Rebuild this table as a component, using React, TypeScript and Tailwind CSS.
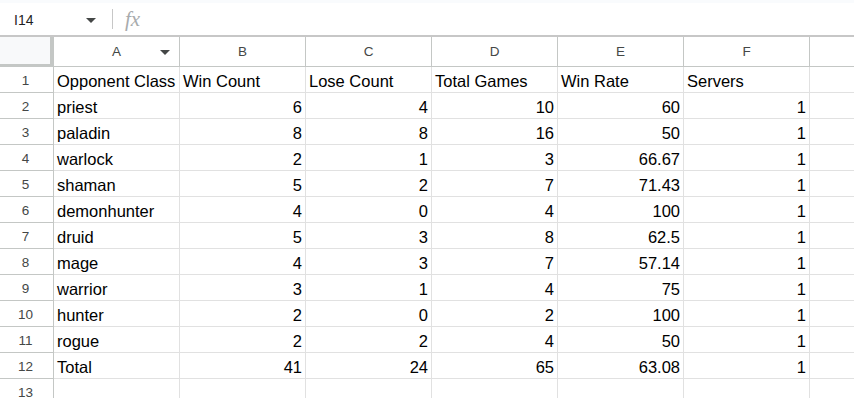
import React from "react";

const columns = ["A", "B", "C", "D", "E", "F"];

const header = ["Opponent Class", "Win Count", "Lose Count", "Total Games", "Win Rate", "Servers"];

const rows: (string | number)[][] = [
  ["priest", 6, 4, 10, 60, 1],
  ["paladin", 8, 8, 16, 50, 1],
  ["warlock", 2, 1, 3, 66.67, 1],
  ["shaman", 5, 2, 7, 71.43, 1],
  ["demonhunter", 4, 0, 4, 100, 1],
  ["druid", 5, 3, 8, 62.5, 1],
  ["mage", 4, 3, 7, 57.14, 1],
  ["warrior", 3, 1, 4, 75, 1],
  ["hunter", 2, 0, 2, 100, 1],
  ["rogue", 2, 2, 4, 50, 1],
  ["Total", 41, 24, 65, 63.08, 1],
];

function Caret({ className }: { className?: string }) {
  return (
    <svg width="10" height="5" viewBox="0 0 10 5" className={className}>
      <path d="M0 0 L10 0 L5 5 Z" fill="#444746" />
    </svg>
  );
}

function RowHeader({ n }: { n: number }) {
  return (
    <div className="flex h-[26px] w-[54px] shrink-0 items-center justify-center border-r border-b border-[#c4c7c5] pt-[3px] pr-[2px] text-[13.5px] text-[#444746]">
      {n}
    </div>
  );
}

function Cell({ value }: { value?: string | number }) {
  const isNum = typeof value === "number";
  return (
    <div
      className={`flex h-[26px] w-[126px] shrink-0 items-center border-r border-b border-[#e1e1e1] px-[3px] pt-[4px] text-[16.5px] text-black ${
        isNum ? "justify-end" : "justify-start"
      }`}
    >
      <span className="whitespace-nowrap">{value}</span>
    </div>
  );
}

function DataRow({ n, cells }: { n: number; cells: (string | number)[] }) {
  return (
    <div className="flex">
      <RowHeader n={n} />
      {columns.map((c, i) => (
        <Cell key={c} value={cells[i]} />
      ))}
      <div className="h-[26px] w-[44px] shrink-0 border-b border-[#e1e1e1]" />
    </div>
  );
}

export default function App() {
  return (
    <div
      className="h-[398px] w-[854px] overflow-hidden bg-white"
      style={{ fontFamily: '"Liberation Sans", Arial, sans-serif' }}
    >
      <div className="h-[3px] bg-[#f9fbfd]" />

      {/* name box + formula bar */}
      <div className="flex h-[34px] items-center border-b-2 border-[#c7c7c7]">
        <div className="flex w-[104px] items-center pt-[3px] pl-[14px] pr-[8px]">
          <span className="flex-1 text-[14px] text-[#1f1f1f]">I14</span>
          <Caret />
        </div>
        <div className="ml-[8px] h-[20px] w-px bg-[#c7c7c7]" />
        <span
          className="ml-[12px] pt-[2px] text-[21px] italic text-[#a8abad]"
          style={{ fontFamily: '"Liberation Serif", "Times New Roman", serif' }}
        >
          fx
        </span>
      </div>

      {/* column headers */}
      <div className="flex">
        <div className="h-[30px] w-[54px] shrink-0 border-r-4 border-b-[3px] border-[#c4c7c5] bg-[#f8f9fa]" />
        {columns.map((c, i) => (
          <div
            key={c}
            className="relative flex h-[30px] w-[126px] shrink-0 items-center justify-center border-r border-b border-[#c4c7c5] pt-[2px] text-[13.5px] text-[#444746]"
          >
            {c}
            {i === 0 && <Caret className="absolute right-[9px] top-[13px]" />}
          </div>
        ))}
        <div className="h-[30px] w-[44px] shrink-0 border-b border-[#c4c7c5]" />
      </div>

      <DataRow n={1} cells={header} />
      {rows.map((r, i) => (
        <DataRow key={i} n={i + 2} cells={r} />
      ))}
      <DataRow n={13} cells={[]} />
    </div>
  );
}
